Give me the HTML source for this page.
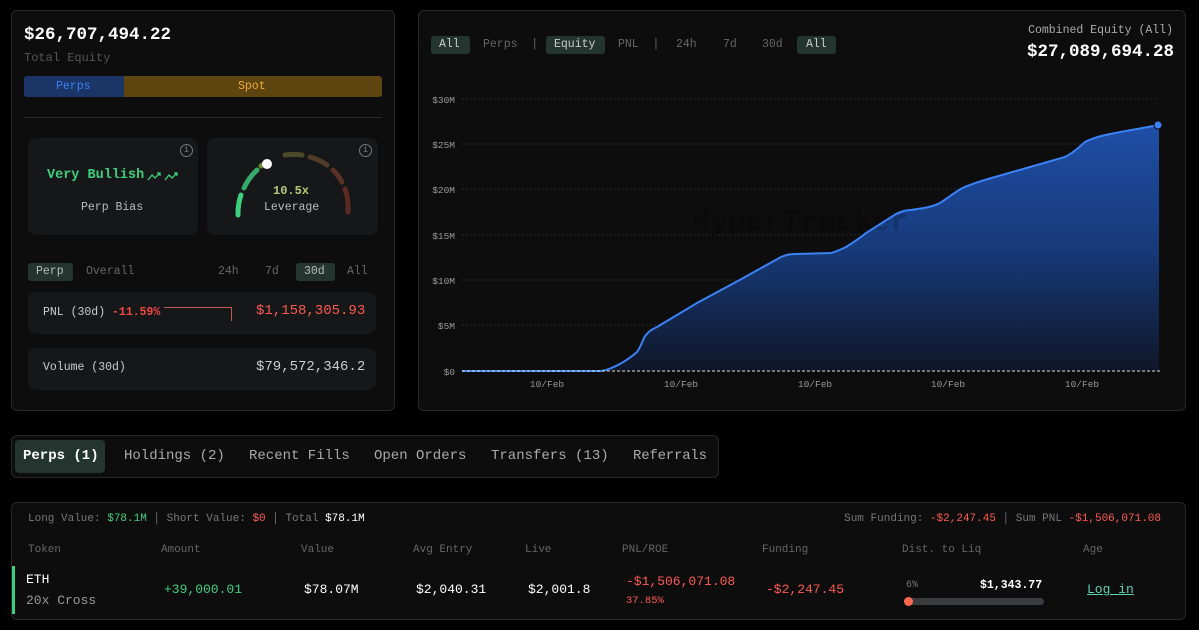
<!DOCTYPE html>
<html><head><meta charset="utf-8"><style>
*{margin:0;padding:0;box-sizing:border-box}
body{width:1199px;height:630px;background:#000;font-family:"Liberation Mono",monospace;color:#ddd;position:relative;overflow:hidden}
.a{position:absolute;white-space:nowrap}
.panel{position:absolute;background:#0d0d0e;border:1px solid #26272a;border-radius:6px}
.card{position:absolute;background:#161718;border-radius:8px}
.pill{position:absolute;background:#24352f;border-radius:3px}
.g{color:#7d8080}
</style></head><body>
<div class="panel" style="left:11px;top:10px;width:384px;height:401px"></div>
<div class="a" style="left:24px;top:25px;font-size:17.5px;font-weight:bold;color:#fff">$26,707,494.22</div>
<div class="a g" style="left:24px;top:51px;font-size:12px;color:#555">Total Equity</div>
<div class="a" style="left:24px;top:76px;width:100px;height:21px;background:#1b3566;border-radius:3px 0 0 3px"></div>
<div class="a" style="left:124px;top:76px;width:258px;height:21px;background:#5e4510;border-radius:0 3px 3px 0"></div>
<div class="a" style="left:56px;top:80px;font-size:11.5px;color:#3b82f6">Perps</div>
<div class="a" style="left:238px;top:80px;font-size:11.5px;color:#f2a93b">Spot</div>
<div class="a" style="left:24px;top:117px;width:358px;height:1px;background:#2a2b2d"></div>
<div class="card" style="left:28px;top:138px;width:170px;height:97px"></div>
<div class="card" style="left:207px;top:138px;width:171px;height:97px"></div>
<div class="a" style="left:180px;top:144px;width:13px;height:13px;border:1px solid #777;border-radius:50%;font-size:8px;color:#888;text-align:center;line-height:11px">i</div>
<div class="a" style="left:359px;top:144px;width:13px;height:13px;border:1px solid #777;border-radius:50%;font-size:8px;color:#888;text-align:center;line-height:11px">i</div>
<div class="a" style="left:47px;top:168px;font-size:13.5px;font-weight:bold;color:#3ecf7f">Very Bullish</div>
<svg class="a" style="left:147px;top:170px" width="34" height="12" viewBox="0 0 34 12"><g fill="none" stroke="#3ecf7f" stroke-width="1.3"><path d="M1 10 L5 5 L8 8 L13 3 M10 3 H13 V6"/><path d="M18 10 L22 5 L25 8 L30 3 M27 3 H30 V6"/></g></svg>
<div class="a" style="left:81px;top:201px;font-size:11.5px;color:#bbb">Perp Bias</div>
<svg class="a" style="left:225px;top:150px" width="135" height="70" viewBox="0 0 135 70">
<g fill="none" stroke-width="5" stroke-linecap="round">
<path d="M13 65 A57 57 0 0 1 16 45" stroke="#3ecf7f"/>
<path d="M19 38 A57 57 0 0 1 32 20" stroke="#3ecf7f" opacity=".8"/>
<path d="M36 16 A57 57 0 0 1 43 12" stroke="#6a8a3a"/>
<path d="M60 5 A57 57 0 0 1 77 5" stroke="#4a4a2a"/>
<path d="M85 7 A57 57 0 0 1 102 15" stroke="#4e3c28"/>
<path d="M108 20 A57 57 0 0 1 117 32" stroke="#5a3028"/>
<path d="M120 39 A57 57 0 0 1 123 62" stroke="#5a2a24"/>
</g><circle cx="42" cy="14" r="5" fill="#fff"/></svg>
<div class="a" style="left:273px;top:184px;font-size:12px;font-weight:bold;color:#b6c97a">10.5x</div>
<div class="a" style="left:264px;top:201px;font-size:11.5px;color:#bbb">Leverage</div>
<div class="pill" style="left:28px;top:263px;width:45px;height:18px"></div>
<div class="a" style="left:36px;top:265px;font-size:11.5px;color:#bbb">Perp</div>
<div class="a g" style="left:86px;top:265px;font-size:11.5px;color:#666">Overall</div>
<div class="a" style="left:218px;top:265px;font-size:11.5px;color:#666">24h</div>
<div class="a" style="left:265px;top:265px;font-size:11.5px;color:#666">7d</div>
<div class="pill" style="left:296px;top:263px;width:39px;height:18px"></div>
<div class="a" style="left:304px;top:265px;font-size:11.5px;color:#bbb">30d</div>
<div class="a" style="left:347px;top:265px;font-size:11.5px;color:#666">All</div>
<div class="card" style="left:28px;top:292px;width:348px;height:42px"></div>
<div class="a" style="left:43px;top:306px;font-size:11.5px;color:#ccc">PNL (30d) <span style="color:#f0473f;font-weight:bold">-11.59%</span></div>
<div class="a" style="left:164px;top:307px;width:68px;height:14px;border-top:1px solid #c05a50;border-right:1px solid #c05a50"></div>
<div class="a" style="left:256px;top:303px;font-size:14px;color:#ff5a4f">$1,158,305.93</div>
<div class="card" style="left:28px;top:348px;width:348px;height:42px"></div>
<div class="a" style="left:43px;top:361px;font-size:11.5px;color:#ccc">Volume (30d)</div>
<div class="a" style="left:256px;top:359px;font-size:14px;color:#ccc">$79,572,346.2</div>

<div class="panel" style="left:418px;top:10px;width:768px;height:401px"></div>
<div class="pill" style="left:431px;top:36px;width:39px;height:18px"></div>
<div class="a" style="left:439px;top:38px;font-size:11.5px;color:#ccc">All</div>
<div class="a" style="left:483px;top:38px;font-size:11.5px;color:#666">Perps &nbsp;|</div>
<div class="pill" style="left:546px;top:36px;width:59px;height:18px"></div>
<div class="a" style="left:554px;top:38px;font-size:11.5px;color:#ccc">Equity</div>
<div class="a" style="left:618px;top:38px;font-size:11.5px;color:#666">PNL &nbsp;|</div>
<div class="a" style="left:676px;top:38px;font-size:11.5px;color:#666">24h</div>
<div class="a" style="left:723px;top:38px;font-size:11.5px;color:#666">7d</div>
<div class="a" style="left:762px;top:38px;font-size:11.5px;color:#666">30d</div>
<div class="pill" style="left:797px;top:36px;width:39px;height:18px"></div>
<div class="a" style="left:806px;top:38px;font-size:11.5px;color:#ccc">All</div>
<div class="a" style="right:26px;top:24px;font-size:11.5px;color:#aaa">Combined Equity (All)</div>
<div class="a" style="right:25px;top:42px;font-size:17.5px;font-weight:bold;color:#fff">$27,089,694.28</div>
<svg class="a" style="left:418px;top:10px" width="768" height="400" viewBox="418 10 768 400">
<defs><linearGradient id="gr" gradientUnits="userSpaceOnUse" x1="0" y1="125" x2="0" y2="371"><stop offset="0" stop-color="#1e4ea6"/><stop offset="0.5" stop-color="#173a7a"/><stop offset="1" stop-color="#0f1628"/></linearGradient></defs>
<g stroke="#2a2b2e" stroke-dasharray="2 2"><line x1="462" x2="1158" y1="99" y2="99"/><line x1="462" x2="1158" y1="144" y2="144"/><line x1="462" x2="1158" y1="189" y2="189"/><line x1="462" x2="1158" y1="235" y2="235"/><line x1="462" x2="1158" y1="280" y2="280"/><line x1="462" x2="1158" y1="325" y2="325"/></g>
<g font-family="Liberation Mono" font-size="9.5" fill="#999" text-anchor="end"><text x="455" y="103">$30M</text><text x="455" y="148">$25M</text><text x="455" y="193">$20M</text><text x="455" y="239">$15M</text><text x="455" y="284">$10M</text><text x="455" y="329">$5M</text><text x="455" y="375">$0</text></g>
<g font-family="Liberation Mono" font-size="9.5" fill="#999" text-anchor="middle"><text x="547" y="387">10/Feb</text><text x="681" y="387">10/Feb</text><text x="815" y="387">10/Feb</text><text x="948" y="387">10/Feb</text><text x="1082" y="387">10/Feb</text></g>
<path d="M462 371 L602 371 C615 368 628 360 637 352 C642 345 643 338 646 335 C650 330 653 329 657 327 L697 303 L736 282 L781 257 C788 254 792 254 796 254 L831 253 C838 251 842 249 846 247 C854 242 860 238 866 233 L896 214 C902 211 906 210 911 210 C925 208 932 207 940 203 C955 193 960 188 970 185 C980 181 988 179 995 177 L1030 167 L1065 157 C1075 152 1080 146 1085 142 C1095 137 1105 135 1115 133 L1159 125 L1159 371 Z" fill="url(#gr)"/>
<text x="800" y="230" font-family="Liberation Mono" font-size="30" font-weight="bold" fill="#000" fill-opacity=".18" text-anchor="middle">HyperTracker</text>
<path d="M462 371 L602 371 C615 368 628 360 637 352 C642 345 643 338 646 335 C650 330 653 329 657 327 L697 303 L736 282 L781 257 C788 254 792 254 796 254 L831 253 C838 251 842 249 846 247 C854 242 860 238 866 233 L896 214 C902 211 906 210 911 210 C925 208 932 207 940 203 C955 193 960 188 970 185 C980 181 988 179 995 177 L1030 167 L1065 157 C1075 152 1080 146 1085 142 C1095 137 1105 135 1115 133 L1159 125" fill="none" stroke="#3b82f6" stroke-width="2"/>
<line x1="462" x2="1160" y1="371" y2="371" stroke="#ddd" stroke-dasharray="3 2"/>
<circle cx="1158" cy="125" r="4" fill="#3b82f6" stroke="#0d0d0e" stroke-width="1"/>
</svg>

<div class="panel" style="left:11px;top:435px;width:708px;height:43px"></div>
<div class="a" style="left:15px;top:440px;width:90px;height:33px;background:#24352f;border-radius:4px"></div>
<div class="a" style="left:23px;top:448px;font-size:14px;font-weight:bold;color:#fff">Perps (1)</div>
<div class="a" style="left:124px;top:448px;font-size:14px;color:#aaa">Holdings (2)</div>
<div class="a" style="left:249px;top:448px;font-size:14px;color:#aaa">Recent Fills</div>
<div class="a" style="left:374px;top:448px;font-size:14px;color:#aaa">Open Orders</div>
<div class="a" style="left:491px;top:448px;font-size:14px;color:#aaa">Transfers (13)</div>
<div class="a" style="left:633px;top:448px;font-size:14px;letter-spacing:-0.2px;color:#aaa">Referrals</div>

<div class="panel" style="left:11px;top:502px;width:1175px;height:118px"></div>
<div class="a" style="left:28px;top:513px;font-size:11px;color:#777">Long Value: <span style="color:#3ecf7f">$78.1M</span> │ Short Value: <span style="color:#ff5a4f">$0</span> │ Total <span style="color:#fff">$78.1M</span></div>
<div class="a" style="right:38px;top:513px;font-size:11px;color:#777">Sum Funding: <span style="color:#ff5a4f">-$2,247.45</span> │ Sum PNL <span style="color:#ff5a4f">-$1,506,071.08</span></div>
<div class="a" style="left:28px;top:544px;font-size:11px;color:#666">Token</div>
<div class="a" style="left:161px;top:544px;font-size:11px;color:#666">Amount</div>
<div class="a" style="left:301px;top:544px;font-size:11px;color:#666">Value</div>
<div class="a" style="left:413px;top:544px;font-size:11px;color:#666">Avg Entry</div>
<div class="a" style="left:525px;top:544px;font-size:11px;color:#666">Live</div>
<div class="a" style="left:622px;top:544px;font-size:11px;color:#666">PNL/ROE</div>
<div class="a" style="left:762px;top:544px;font-size:11px;color:#666">Funding</div>
<div class="a" style="left:902px;top:544px;font-size:11px;color:#666">Dist. to Liq</div>
<div class="a" style="left:1083px;top:544px;font-size:11px;color:#666">Age</div>
<div class="a" style="left:12px;top:566px;width:3px;height:48px;background:#3ecf7f"></div>
<div class="a" style="left:26px;top:572px;font-size:13px;color:#fff">ETH</div>
<div class="a" style="left:26px;top:593px;font-size:13px;color:#999">20x Cross</div>
<div class="a" style="left:164px;top:582px;font-size:13px;color:#3ecf7f">+39,000.01</div>
<div class="a" style="left:304px;top:582px;font-size:13px;color:#fff">$78.07M</div>
<div class="a" style="left:416px;top:582px;font-size:13px;color:#fff">$2,040.31</div>
<div class="a" style="left:528px;top:582px;font-size:13px;color:#fff">$2,001.8</div>
<div class="a" style="left:626px;top:574px;font-size:13px;color:#ff5a4f">-$1,506,071.08</div>
<div class="a" style="left:626px;top:595px;font-size:10.5px;color:#ff5a4f">37.85%</div>
<div class="a" style="left:766px;top:582px;font-size:13px;color:#ff5a4f">-$2,247.45</div>
<div class="a" style="left:906px;top:580px;font-size:10px;color:#777">6%</div>
<div class="a" style="left:980px;top:579px;font-size:11.5px;font-weight:bold;color:#fff">$1,343.77</div>
<div class="a" style="left:904px;top:598px;width:140px;height:7px;background:#3a3b3e;border-radius:4px"></div>
<div class="a" style="left:904px;top:597px;width:9px;height:9px;background:#ff6a4f;border-radius:50%"></div>
<div class="a" style="left:1087px;top:582px;font-size:13px;color:#5ed3b0;text-decoration:underline">Log in</div>
</body></html>
